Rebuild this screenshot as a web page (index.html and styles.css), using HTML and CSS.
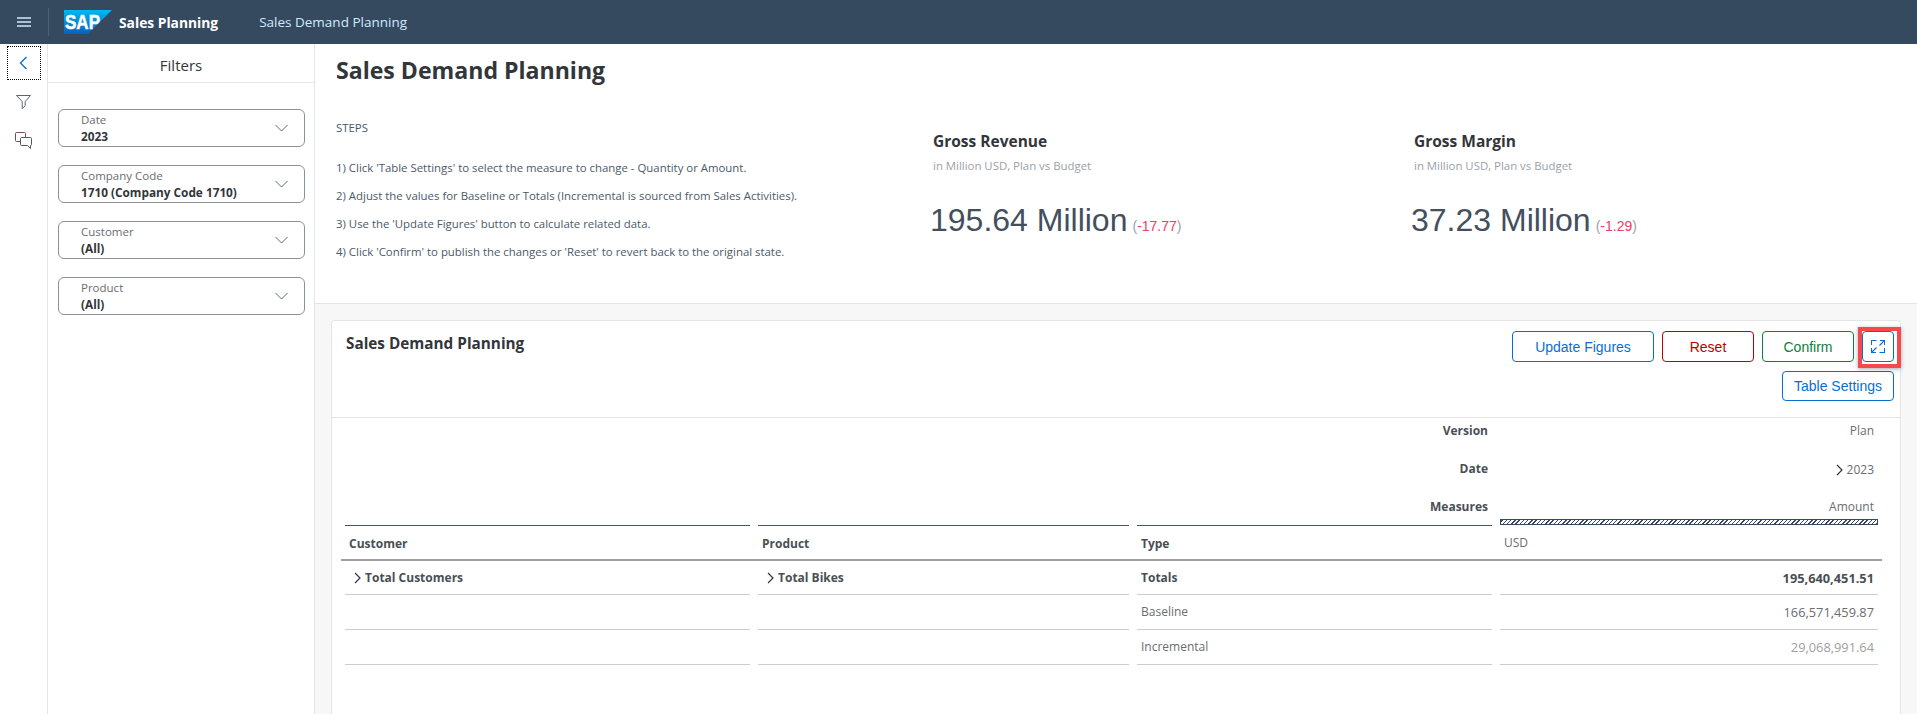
FILE: index.html
```html
<!DOCTYPE html>
<html>
    <head>
        <meta charset="utf-8">
        <title>Sales Demand Planning</title>
        <link rel="stylesheet" href="styles.css">
    </head>

    <body>
        <header class="shell">
            <svg class="menu-icon" width="14" height="10" viewBox="0 0 14 10">
                <path d="M0 1h14M0 5h14M0 9h14" stroke="#d1e8ff" stroke-width="1.6"/>
            </svg>
            <span class="shell-sep"></span>
            <svg class="logo" width="48" height="24" viewBox="0 0 48 24">
                <defs>
                    <linearGradient id="sapBlue" x1="0" y1="0" x2="0" y2="1">
                        <stop offset="0" stop-color="#00b8f1"/>
                        <stop offset="1" stop-color="#0a5fc0"/>
                    </linearGradient>
                </defs>
                <polygon points="0,0 48,0 24,24 0,24" fill="url(#sapBlue)"/>
                <text x="1" y="18.5" class="logo-text" textLength="35" lengthAdjust="spacingAndGlyphs">SAP</text>
            </svg>
            <span class="shell-app">Sales Planning</span>
            <span class="shell-page">Sales Demand Planning</span>
        </header>

        <div class="body-row">
            <nav class="rail">
                <button class="rail-back">
                    <svg width="9" height="14" viewBox="0 0 9 14"><path d="M7.5 1 1.5 7l6 6" fill="none" stroke="#0a6ed1" stroke-width="1.4"/></svg>
                </button>
                <svg class="rail-icon" width="15" height="14" viewBox="0 0 15 14">
                    <path d="M.5.5h14L9.2 6.5v4.2L6.2 13.5V6.5z" fill="none" stroke="#5a6570" stroke-width="1"/>
                </svg>
                <svg class="rail-icon" width="17" height="17" viewBox="0 0 17 17">
                    <path d="M5 9.5H1.5a1 1 0 0 1-1-1v-7a1 1 0 0 1 1-1h8a1 1 0 0 1 1 1V5" fill="none" stroke="#7a4a4a" stroke-width="1"/>
                    <path d="M6.5 5.5h9a1 1 0 0 1 1 1v6a1 1 0 0 1-1 1v3l-3-3h-6a1 1 0 0 1-1-1v-6a1 1 0 0 1 1-1z" fill="none" stroke="#5a5560" stroke-width="1"/>
                </svg>
            </nav>

            <aside class="filters">
                <h2 class="filters-title">Filters</h2>
                <div class="filter-list">
                    <div class="filter">
                        <div class="filter-text"><span class="filter-label">Date</span><span class="filter-value">2023</span></div>
                        <svg class="chevron" width="13" height="8" viewBox="0 0 13 8"><path d="M.5 1l6 6 6-6" fill="none" stroke="#5a6f85" stroke-width="1"/></svg>
                    </div>
                    <div class="filter">
                        <div class="filter-text"><span class="filter-label">Company Code</span><span class="filter-value">1710 (Company Code 1710)</span></div>
                        <svg class="chevron" width="13" height="8" viewBox="0 0 13 8"><path d="M.5 1l6 6 6-6" fill="none" stroke="#5a6f85" stroke-width="1"/></svg>
                    </div>
                    <div class="filter">
                        <div class="filter-text"><span class="filter-label">Customer</span><span class="filter-value">(All)</span></div>
                        <svg class="chevron" width="13" height="8" viewBox="0 0 13 8"><path d="M.5 1l6 6 6-6" fill="none" stroke="#5a6f85" stroke-width="1"/></svg>
                    </div>
                    <div class="filter">
                        <div class="filter-text"><span class="filter-label">Product</span><span class="filter-value">(All)</span></div>
                        <svg class="chevron" width="13" height="8" viewBox="0 0 13 8"><path d="M.5 1l6 6 6-6" fill="none" stroke="#5a6f85" stroke-width="1"/></svg>
                    </div>
                </div>
            </aside>

            <main class="main">
                <section class="summary">
                    <h1 class="page-title">Sales Demand Planning</h1>
                    <div class="summary-row">
                        <div class="steps">
                            <p class="steps-head">STEPS</p>
                            <p>1) Click 'Table Settings' to select the measure to change - Quantity or Amount.</p>
                            <p>2) Adjust the values for Baseline or Totals (Incremental is sourced from Sales Activities).</p>
                            <p>3) Use the 'Update Figures' button to calculate related data.</p>
                            <p>4) Click 'Confirm' to publish the changes or 'Reset' to revert back to the original state.</p>
                        </div>
                        <div class="metric metric-revenue">
                            <h3 class="metric-title">Gross Revenue</h3>
                            <div class="metric-sub">in Million USD, Plan vs Budget</div>
                            <div class="metric-value">195.64 Million<span class="metric-delta">(<b>-17.77</b>)</span></div>
                        </div>
                        <div class="metric">
                            <h3 class="metric-title">Gross Margin</h3>
                            <div class="metric-sub">in Million USD, Plan vs Budget</div>
                            <div class="metric-value">37.23 Million<span class="metric-delta">(<b>-1.29</b>)</span></div>
                        </div>
                    </div>
                </section>

                <section class="content">
                    <div class="card">
                        <div class="card-head">
                            <h3 class="card-title">Sales Demand Planning</h3>
                            <div class="actions">
                                <div class="action-row">
                                    <button class="btn btn-update">Update Figures</button>
                                    <button class="btn btn-reset">Reset</button>
                                    <button class="btn btn-confirm">Confirm</button>
                                    <button class="btn btn-expand">
                                        <svg width="14" height="13" viewBox="0 0 14 13">
                                            <path d="M5.5.5H.5V5M8.5 12.5h5V8M9 .5h4.5V5M13.5.5 8.5 5.5M.5 8v4.5H5M.5 12.5l5-5" fill="none" stroke="#0a6ed1" stroke-width="1.1"/>
                                        </svg>
                                    </button>
                                </div>
                                <button class="btn btn-settings">Table Settings</button>
                            </div>
                        </div>

                        <div class="grid">
                            <div class="tr tr-version">
                                <div class="dim">Version</div>
                                <div class="dim-val">Plan</div>
                            </div>
                            <div class="tr tr-date">
                                <div class="dim">Date</div>
                                <div class="dim-val dim-val-low"><svg class="expander" width="7" height="12" viewBox="0 0 7 12"><path d="M1 1l5 5-5 5" fill="none" stroke="#32363a" stroke-width="1.2"/></svg>2023</div>
                            </div>
                            <div class="tr tr-measure">
                                <div class="dim">Measures</div>
                                <div class="dim-val">Amount<span class="hatch"></span></div>
                            </div>
                            <div class="tr tr-head">
                                <div class="th">Customer</div>
                                <div class="th">Product</div>
                                <div class="th">Type</div>
                                <div class="th th-unit">USD</div>
                            </div>
                            <div class="tr tr-data tr-total">
                                <div class="td"><svg class="expander" width="7" height="12" viewBox="0 0 7 12"><path d="M1 1l5 5-5 5" fill="none" stroke="#32363a" stroke-width="1.2"/></svg>Total Customers</div>
                                <div class="td"><svg class="expander" width="7" height="12" viewBox="0 0 7 12"><path d="M1 1l5 5-5 5" fill="none" stroke="#32363a" stroke-width="1.2"/></svg>Total Bikes</div>
                                <div class="td">Totals</div>
                                <div class="td td-num">195,640,451.51</div>
                            </div>
                            <div class="tr tr-data">
                                <div class="td"></div>
                                <div class="td"></div>
                                <div class="td">Baseline</div>
                                <div class="td td-num">166,571,459.87</div>
                            </div>
                            <div class="tr tr-data">
                                <div class="td"></div>
                                <div class="td"></div>
                                <div class="td">Incremental</div>
                                <div class="td td-num td-muted">29,068,991.64</div>
                            </div>
                        </div>
                    </div>
                </section>
            </main>
        </div>
    </body>
</html>
```

FILE: styles.css
```css
html, body {
    margin: 0;
    height: 100%;
    overflow: hidden;
}
body {
    font-family: "Open Sans", "Liberation Sans", sans-serif;
    color: #32363a;
    background: #fff;
    display: flex;
    flex-direction: column;
}
h1, h2, h3, p {
    margin: 0;
}
button {
    font-family: "Liberation Sans", sans-serif;
    background: #fff;
    cursor: pointer;
}

/* top bar */
.shell {
    height: 44px;
    flex: none;
    background: #354a5f;
    display: flex;
    align-items: center;
    padding-left: 17px;
    box-sizing: border-box;
}
.shell-sep {
    width: 1px;
    height: 28px;
    margin: 0 15px 0 17px;
    background: #4d6175;
}
.logo-text {
    font: bold 21px "Liberation Sans", sans-serif;
    fill: #fff;
    stroke: #fff;
    stroke-width: .5px;
}
.shell-app {
    margin-left: 7px;
    font-size: 13.8px;
    font-weight: 700;
    color: #fff;
}
.shell-page {
    margin-left: 41px;
    font-size: 13.5px;
    color: #d1e8ff;
}

.body-row {
    flex: 1;
    display: flex;
    min-height: 0;
}

/* icon rail */
.rail {
    width: 48px;
    flex: none;
    box-sizing: border-box;
    border-right: 1px solid #e5e5e5;
    display: flex;
    flex-direction: column;
    align-items: center;
    padding: 2px 0 0 0;
}
.rail-back {
    width: 34px;
    height: 34px;
    border: 1px dotted #000;
    padding: 0;
    display: flex;
    align-items: center;
    justify-content: center;
}
.rail-icon {
    margin-top: 15px;
}
.rail-icon + .rail-icon {
    margin-top: 23px;
}

/* filter panel */
.filters {
    width: 267px;
    flex: none;
    box-sizing: border-box;
    border-right: 1px solid #e5e5e5;
}
.filters-title {
    height: 39px;
    box-sizing: border-box;
    border-bottom: 1px solid #e5e5e5;
    padding-top: 11px;
    text-align: center;
    font-size: 15px;
    line-height: 20px;
    font-weight: 400;
}
.filter-list {
    display: flex;
    flex-direction: column;
    gap: 18px;
    padding: 26px 9px 0 10px;
}
.filter {
    height: 38px;
    box-sizing: border-box;
    border: 1px solid #89919a;
    border-radius: 6px;
    display: flex;
    align-items: center;
    justify-content: space-between;
    padding: 0 16px 0 22px;
}
.filter-text {
    display: flex;
    flex-direction: column;
}
.filter-label {
    font-size: 11.5px;
    line-height: 16px;
    color: #6a6d70;
}
.filter-value {
    font-size: 11.8px;
    line-height: 16px;
    font-weight: 700;
}

/* summary */
.main {
    flex: 1;
    min-width: 0;
    display: flex;
    flex-direction: column;
}
.summary {
    height: 260px;
    flex: none;
    box-sizing: border-box;
    border-bottom: 1px solid #e5e5e5;
    padding: 10px 0 0 21px;
}
.page-title {
    font-size: 23.1px;
    line-height: 32px;
    font-weight: 700;
}
.summary-row {
    display: flex;
}
.steps {
    width: 597px;
    flex: none;
    font-size: 11.4px;
    color: #4a5a6a;
    padding-top: 34px;
}
.steps p {
    line-height: 16px;
    margin-bottom: 12px;
}
.steps .steps-head {
    margin-bottom: 24px;
}
.metric {
    width: 481px;
    flex: none;
    padding-top: 45px;
}
.metric-title {
    font-size: 15.5px;
    line-height: 20px;
    font-weight: 700;
}
.metric-sub {
    margin-top: 7px;
    font-size: 11.4px;
    line-height: 16px;
    color: #9aa1a8;
}
.metric-value {
    margin: 26px 0 0 -3px;
    font-family: "Liberation Sans", sans-serif;
    font-size: 32px;
    line-height: 40px;
    color: #434f5e;
}
.metric-delta {
    margin-left: 5px;
    font-size: 14px;
    color: #9aa1a8;
}
.metric-delta b {
    font-weight: 400;
    color: #f0405f;
}

/* table card */
.content {
    flex: 1;
    min-height: 0;
    background: #f7f7f7;
    padding: 16px 16px 0 16px;
}
.card {
    height: 100%;
    box-sizing: border-box;
    background: #fff;
    border: 1px solid #e5e5e5;
    border-bottom: 0;
    border-radius: 4px 4px 0 0;
}
.card-head {
    height: 97px;
    box-sizing: border-box;
    border-bottom: 1px solid #e5e5e5;
    display: flex;
    justify-content: space-between;
    padding: 10px 6px 0 14px;
}
.card-title {
    font-size: 15.3px;
    line-height: 24px;
    font-weight: 700;
}
.actions {
    display: flex;
    flex-direction: column;
    align-items: flex-end;
    gap: 9px;
}
.action-row {
    display: flex;
    gap: 8px;
}
.btn {
    height: 31px;
    box-sizing: border-box;
    border-radius: 4px;
    border: 1px solid #0a6ed1;
    color: #0a6ed1;
    font-size: 14px;
    padding: 0;
}
.btn-update {
    width: 142px;
}
.btn-reset {
    width: 92px;
    border-color: #bb0000;
    color: #bb0000;
}
.btn-confirm {
    width: 92px;
    border-color: #107e3e;
    color: #107e3e;
}
.btn-expand {
    width: 32px;
    position: relative;
    display: flex;
    align-items: center;
    justify-content: center;
}
/* annotation box drawn on top of the screenshot */
.btn-expand::after {
    content: "";
    position: absolute;
    top: -5px;
    right: -8px;
    bottom: -7px;
    left: -5px;
    border: 4px solid #f44a4e;
    box-shadow: 0 1px 4px rgba(0, 0, 0, .35);
}
.btn-settings {
    width: 112px;
    height: 30px;
}

.grid {
    padding: 0 18px 0 9px;
    font-size: 12px;
}
.tr {
    display: grid;
    grid-template-columns: 405px 371px 355px 378px;
    column-gap: 8px;
    padding: 0 4px;
}
.dim {
    grid-column: 1 / 4;
    text-align: right;
    font-weight: 700;
    line-height: 24px;
    padding-right: 4px;
    color: #4a4f55;
}
.dim-val {
    text-align: right;
    line-height: 24px;
    padding-right: 4px;
    color: #6a6d70;
}
.tr-version {
    height: 24px;
    padding-top: 1px;
    box-sizing: border-box;
}
.tr-date {
    height: 53px;
    padding-top: 15px;
    box-sizing: border-box;
}
.dim-val-low {
    padding-top: 1px;
}
.tr-measure {
    height: 30px;
}
.hatch {
    display: block;
    height: 6px;
    margin-right: -4px;
    box-sizing: border-box;
    border: 1px solid #354a5f;
    background: repeating-linear-gradient(-45deg, #354a5f 0 1px, #fff 1px 3px);
}
.tr-head {
    height: 36px;
    box-sizing: border-box;
    border-bottom: 2px solid #a0a0a0;
}
.th {
    border-top: 1px solid #4a5560;
    line-height: 35px;
    padding-left: 4px;
    font-weight: 700;
    color: #4a4f55;
}
.th-unit {
    border-top: 0;
    line-height: 36px;
    font-weight: 400;
    color: #6a6d70;
}
.tr-data .td {
    height: 35px;
    box-sizing: border-box;
    border-bottom: 1px solid #ccc;
    padding-left: 4px;
    line-height: 34px;
    color: #6a6d70;
}
.tr-total .td {
    height: 34px;
    font-weight: 700;
    color: #4a4f55;
}
.tr .td-num {
    text-align: right;
    padding-right: 4px;
    font-size: 12.8px;
}
.tr .td-muted {
    color: #a0a0a0;
}
.expander {
    vertical-align: -2px;
    margin: 0 4px 0 5px;
}
```
